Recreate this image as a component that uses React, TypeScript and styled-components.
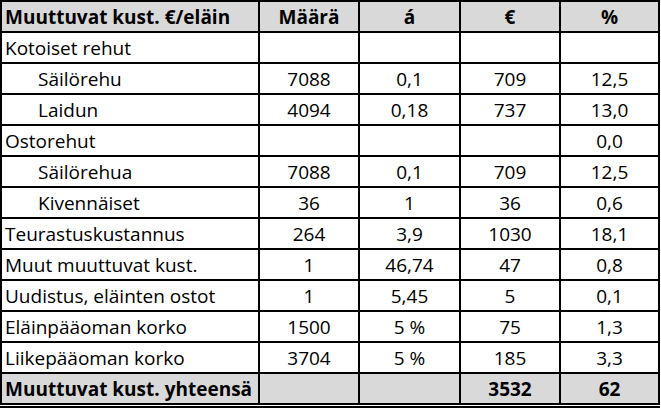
import React from "react";
import styled, { createGlobalStyle } from "styled-components";

const GlobalStyle = createGlobalStyle`
  html, body { margin: 0; padding: 0; background: #ffffff; }
  body { font-family: "Open Sans", "Noto Sans", sans-serif; }
`;

const Frame = styled.div`
  width: 660px;
  background: #ffffff;
  border-bottom: 2px solid #000000;
  padding-bottom: 1px;
`;

const Grid = styled.div`
  display: grid;
  grid-template-columns: 256px 98px 99px 98px 97px;
  grid-auto-rows: 29px;
  gap: 2px;
  padding: 2px;
  background: #000000;
`;

const Cell = styled.div<{ $align?: "left" | "center"; $bold?: boolean; $shade?: boolean; $indent?: boolean }>`
  display: flex;
  align-items: center;
  justify-content: ${(p) => (p.$align === "left" ? "flex-start" : "center")};
  padding: 1px 0 0 ${(p) => (p.$align === "left" ? (p.$indent ? "36px" : "3px") : "0")};
  background: ${(p) => (p.$shade ? "#d9d9d9" : "#ffffff")};
  color: #000000;
  font-family: "Open Sans", "Noto Sans", sans-serif;
  font-size: 19px;
  line-height: 26px;
  font-weight: ${(p) => (p.$bold ? 700 : 400)};
  white-space: nowrap;
  overflow: hidden;
`;

type Row = { label: string; indent?: boolean; vals: string[] };

const header = ["Määrä", "á", "€", "%"];
const rows: Row[] = [
  { label: "Kotoiset rehut", vals: ["", "", "", ""] },
  { label: "Säilörehu", indent: true, vals: ["7088", "0,1", "709", "12,5"] },
  { label: "Laidun", indent: true, vals: ["4094", "0,18", "737", "13,0"] },
  { label: "Ostorehut", vals: ["", "", "", "0,0"] },
  { label: "Säilörehua", indent: true, vals: ["7088", "0,1", "709", "12,5"] },
  { label: "Kivennäiset", indent: true, vals: ["36", "1", "36", "0,6"] },
  { label: "Teurastuskustannus", vals: ["264", "3,9", "1030", "18,1"] },
  { label: "Muut muuttuvat kust.", vals: ["1", "46,74", "47", "0,8"] },
  { label: "Uudistus, eläinten ostot", vals: ["1", "5,45", "5", "0,1"] },
  { label: "Eläinpääoman korko", vals: ["1500", "5 %", "75", "1,3"] },
  { label: "Liikepääoman korko", vals: ["3704", "5 %", "185", "3,3"] },
];
const footer = ["", "", "3532", "62"];

export default function App() {
  return (
    <>
      <GlobalStyle />
      <Frame>
        <Grid>
          <Cell $align="left" $bold $shade>Muuttuvat kust. €/eläin</Cell>
          {header.map((h) => (
            <Cell key={h} $bold $shade>{h}</Cell>
          ))}
          {rows.map((r) => (
            <React.Fragment key={r.label}>
              <Cell $align="left" $indent={r.indent}>{r.label}</Cell>
              {r.vals.map((v, i) => (
                <Cell key={i}>{v}</Cell>
              ))}
            </React.Fragment>
          ))}
          <Cell $align="left" $bold $shade>Muuttuvat kust. yhteensä</Cell>
          {footer.map((v, i) => (
            <Cell key={i} $bold $shade>{v}</Cell>
          ))}
        </Grid>
      </Frame>
    </>
  );
}
